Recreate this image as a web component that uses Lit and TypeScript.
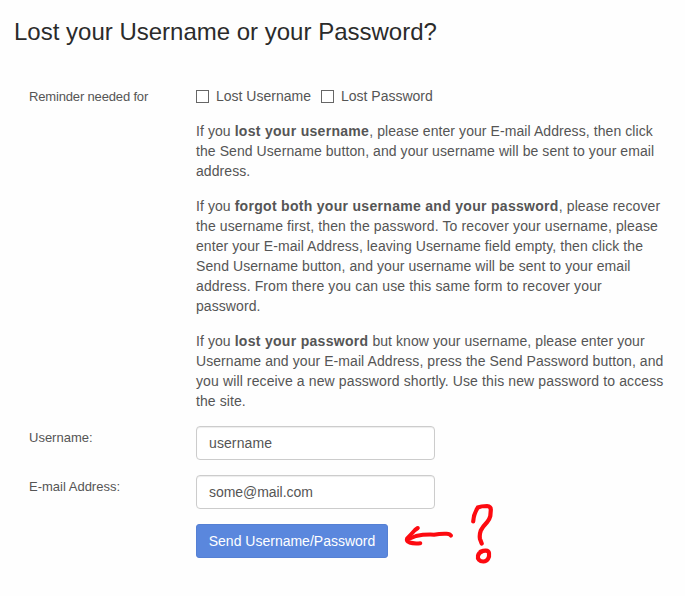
import { LitElement, html, css } from "lit";
import { customElement, state } from "lit/decorators.js";

@customElement("red-note")
class RedNote extends LitElement {
  static styles = css`
    :host { display: block; width: 100px; height: 72px; pointer-events: none; }
    svg { display: block; }
    path { fill: none; stroke: #fd0a10; stroke-linecap: round; stroke-linejoin: round; }
    .arrow { stroke-width: 4; }
    .mark { stroke-width: 4.2; }
  `;

  render() {
    return html`
      <svg width="100" height="72" viewBox="400 498 100 72" aria-hidden="true">
        <path class="arrow" d="M451 535.600Q450 534 446.500 533.800Q440 533.600 434 534.700Q424 534.300 416 536L407.500 539.500" />
        <path class="arrow" d="M417.800 528L415 530Q410.500 535 407 538.700Q406 541 409.500 542.500Q413.500 543.800 420.300 543.200" />
        <path class="mark" d="M473.200 521.500Q473.500 514.500 477.800 507.500Q481 506 487 506Q491 506.300 490.800 510L490.300 516Q489.500 519.500 487 522.300Q482.500 527 480.800 530.500Q479.200 535 480 539L481.700 543.500" />
        <path class="mark" d="M480.500 551.800C484 550.300 488.500 549.800 489 553C489.700 557.500 487.500 561.300 483.500 561.500C479.500 561.600 477.300 559 478 555.800Q478.700 552.500 482.500 551.300" />
      </svg>
    `;
  }
}

@customElement("app-root")
class AppRoot extends LitElement {
  @state() username = "username";
  @state() email = "some@mail.com";

  static styles = css`
    :host {
      display: block;
      box-sizing: border-box;
      height: 596px;
      padding: 16px 14px 0;
      overflow: hidden;
      background: #fefefe;
      color: #555;
      font: 14px/20px "Liberation Sans", Arial, sans-serif;
    }
    h1 { margin: 0 0 38px; font-size: 24px; line-height: 32px; font-weight: 400; color: #2b2b2b; white-space: nowrap; }
    form { display: flex; flex-direction: column; gap: 15px; margin-left: 15px; }
    .row { display: grid; grid-template-columns: 167px 1fr; }
    .label { font-size: 13px; line-height: 20px; }
    .group-label { padding-top: 1px; letter-spacing: -0.16px; }
    .field-label { padding-top: 2px; }
    .checks { display: flex; gap: 10px; }
    .check { display: flex; align-items: center; gap: 7px; white-space: nowrap; }
    .check input { appearance: none; box-sizing: border-box; width: 13px; height: 13px; margin: 1px 0 0; border: 1px solid #666; background: #fff; }
    .check input:checked { background: #5a87dd; }
    p { margin: 15px 0 0; white-space: nowrap; letter-spacing: 0.075px; }
    b { letter-spacing: 0.3px; }
    .loose { letter-spacing: 0.12px; }
    .text {
      box-sizing: border-box; width: 239px; height: 34px; margin: 0; padding: 0 12px;
      border: 1px solid #ccc; border-radius: 4px; background: #fff;
      box-shadow: inset 0 1px 1px rgba(0, 0, 0, 0.075);
      color: #555; font: inherit; letter-spacing: 0.1px;
    }
    #email { letter-spacing: -0.05px; }
    .actions { position: relative; grid-column: 2; }
    .submit {
      display: block; box-sizing: border-box; width: 192px; height: 34px; padding: 0;
      border: 1px solid #5580d4; border-radius: 3px; background: #5a87dd;
      color: #fff; font: inherit; white-space: nowrap;
    }
    red-note { position: absolute; left: 204px; top: -26px; }
  `;

  render() {
    return html`
      <h1>Lost your Username or your Password?</h1>
      <form @submit=${(e: Event) => e.preventDefault()}>
        <div class="row">
          <span class="label group-label">Reminder needed for</span>
          <div>
            <div class="checks">
              <label class="check"><input type="checkbox" />Lost Username</label>
              <label class="check"><input type="checkbox" />Lost Password</label>
            </div>
            <p>If you <b>lost your username</b>, please enter your E-mail Address, then click<br />the Send Username button, and your username will be sent to your email<br />address.</p>
            <p>If you <b>forgot both your username and your password</b><span class="loose">, please recover<br />the username first, then the password. To recover your username, please</span><br />enter your E-mail Address, leaving Username field empty, then click the<br />Send Username button, and your username will be sent to your email<br /><span class="loose">address. From there you can use this same form to recover your</span><br />password.</p>
            <p>If you <b>lost your password</b> but know your username, please enter your<br />Username and your E-mail Address, press the Send Password button, and<br /><span class="loose">you will receive a new password shortly. Use this new password to access</span><br />the site.</p>
          </div>
        </div>
        <div class="row">
          <label class="label field-label" for="username">Username:</label>
          <input class="text" id="username" type="text" .value=${this.username} />
        </div>
        <div class="row">
          <label class="label field-label" for="email">E-mail Address:</label>
          <input class="text" id="email" type="text" .value=${this.email} />
        </div>
        <div class="row">
          <div class="actions">
            <button class="submit">Send Username/Password</button>
            <red-note></red-note>
          </div>
        </div>
      </form>
    `;
  }
}
